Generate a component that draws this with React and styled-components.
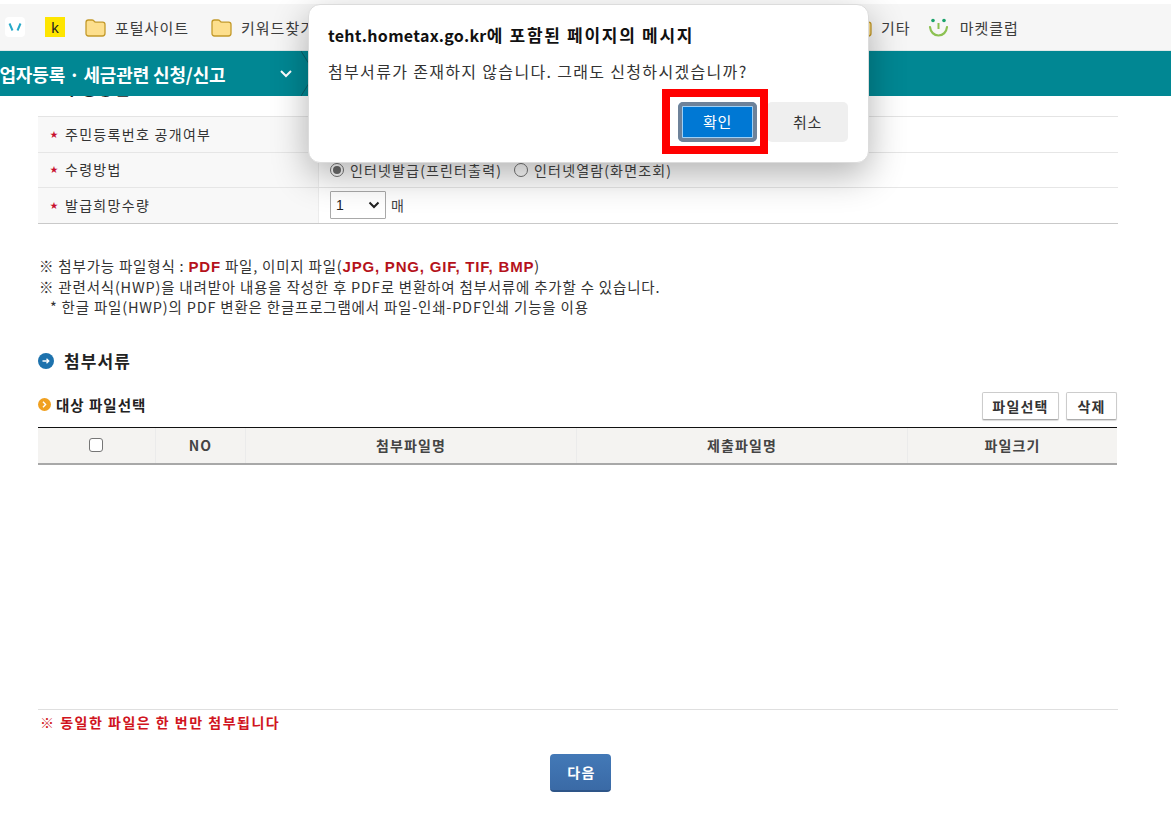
import React from "react";
import styled, { createGlobalStyle } from "styled-components";

const Global = createGlobalStyle`
  html, body { margin: 0; padding: 0; background: #fff; }
  body { width: 1171px; height: 816px; overflow: hidden; font-family: "Noto Sans CJK KR", "Noto Sans", sans-serif; color: #333; }
  * { box-sizing: border-box; }
`;
const Page = styled.div`position: relative; width: 1171px; height: 816px; overflow: hidden;`;
const Bookmarks = styled.div`
  height: 47px; margin-top: 4px; background: #f6f6f6; display: flex; align-items: center; padding-left: 5px;
  font-size: 15px; color: #3c3c3c; letter-spacing: 1px; position: relative; z-index: 2; border-bottom: 1px solid #dfe8e8;
`;
const Mark = styled.span`display: flex; align-items: center; gap: ${p => p.$gap || 9}px; margin-left: ${p => p.$ml || 0}px; white-space: nowrap;`;
const VTile = styled.span`width: 20px; height: 20px; border-radius: 4px; background: #fff; display: flex; align-items: center; justify-content: center;`;
const KTile = styled.span`width: 20px; height: 20px; background: #fee500; margin-left: 20px; display: flex; align-items: center; justify-content: center; font: 15px "Liberation Sans", sans-serif; color: #222; letter-spacing: 0;`;
const TealBar = styled.div`
  height: 45px; background: #018793; display: flex; align-items: center; position: relative; z-index: 2; overflow: hidden;
  color: #fff; font-weight: 700; font-size: 18px; letter-spacing: -0.15px; white-space: nowrap;
`;
const TealTitle = styled.span`margin-left: -17px;`;
const Chevron = styled.svg`margin-left: 54px;`;
const Divider = styled.svg`margin-left: 8px; flex: none;`;
const Main = styled.main`padding: 0 53px 0 38px; margin-top: -24px; position: relative; z-index: 1;`;
const SectionHead = styled.h2`
  margin: 0; display: flex; align-items: center; gap: 10px; height: 30px; padding-left: 0;
  font-size: 17px; font-weight: 700; color: #222; letter-spacing: 1.1px;
`;
const FormTable = styled.div`margin-top: 14px; border-top: 1px solid #e4e4e4; border-bottom: 1px solid #c9c9c9;`;
const FormRow = styled.div`
  display: grid; grid-template-columns: 281px 1fr; height: ${p => p.$h}px;
  & + & { border-top: 1px solid #e6e6e6; }
`;
const Label = styled.div`
  background: #f8f8f8; border-right: 1px solid #ececec; display: flex; align-items: center; padding: 0 0 2px 12px; gap: 9px;
  font-size: 14px; color: #333; letter-spacing: 1.3px;
`;
const Star = styled.span`color: #c8102e; font-size: 8px; line-height: 1; letter-spacing: 0; width: 6px;`;
const Value = styled.div`display: flex; align-items: center; padding: 0 0 1px 11px; font-size: 14px; color: #444; letter-spacing: 1.15px; gap: 6px;`;
const Radio = styled.span`
  width: 14px; height: 14px; border-radius: 50%; border: 1px solid #767676; background: #fff; display: inline-flex;
  align-items: center; justify-content: center; flex: none;
  &::after { content: ""; width: 8px; height: 8px; border-radius: 50%; background: ${p => p.$on ? "#6d6d6d" : "transparent"}; }
`;
const RadioText = styled.span`margin-right: 6px;`;
const FakeSelect = styled.span`
  width: 56px; height: 28px; border: 1px solid #a9a9a9; border-radius: 1px; background: #fff; display: flex; align-items: center;
  justify-content: space-between; padding: 0 5px; font: 14px "Liberation Sans", sans-serif; color: #222; margin-right: -1px;
`;
const Notes = styled.div`margin-top: 32px; font-size: 14.5px; line-height: 20.5px; color: #333; letter-spacing: 0.8px;`;
const Note = styled.div`white-space: nowrap; padding-left: ${p => p.$indent ? 12 : 1}px;`;
const Red = styled.b`color: #b5121b; font: 700 15px "Liberation Sans", sans-serif; letter-spacing: 0.8px;`;
const AttachHead = styled(SectionHead)`margin-top: 28px;`;
const SubBar = styled.div`display: flex; align-items: center; justify-content: space-between; margin-top: 15px; height: 30px; padding-right: 1px;`;
const SubTitle = styled.div`display: flex; align-items: center; gap: 5px; padding-bottom: 3px; font-size: 14.5px; font-weight: 700; color: #222; letter-spacing: 1px;`;
const Tools = styled.div`display: flex; gap: 7px;`;
const ToolBtn = styled.button`
  height: 28px; width: ${p => p.$w}px; padding: 0; background: #fff; border: 1px solid #ccc; border-bottom-color: #aaa; border-radius: 2px;
  box-shadow: 0 1px 1px rgba(0,0,0,.15); font: 700 14px "Noto Sans CJK KR", sans-serif; color: #333; letter-spacing: 1.2px;
`;
const FileTable = styled.div`
  margin-top: 6px; width: 1079px; height: 38px; border-top: 1px solid #111; border-bottom: 2px solid #a8a8a8; background: #f4f3f1;
  display: grid; grid-template-columns: 117px 90px 331px 331px 210px;
`;
const Th = styled.div`
  display: flex; align-items: center; justify-content: center; padding-bottom: 1px; font-size: 14px; font-weight: 700; color: #444; letter-spacing: 1.1px;
  & + & { border-left: 1px solid #ebebeb; }
`;
const Check = styled.span`width: 14px; height: 14px; margin-right: 1px; border: 1px solid #767676; border-radius: 3px; background: #fff;`;
const Footer = styled.div`margin-top: 244px; border-top: 1px solid #dfdfdf; width: 1080px; padding: 2px 0 0 2px; height: 45px; font-size: 14px; font-weight: 700; color: #d01420; letter-spacing: 1.5px;`;
const NextRow = styled.div`display: flex; justify-content: center; width: 1085px;`;
const NextBtn = styled.button`
  width: 61px; height: 38px; border: 0; border-radius: 4px; background: linear-gradient(#4379b7, #3a6aa6); border-bottom: 2px solid #2e5588;
  color: #fff; font: 700 14px "Noto Sans CJK KR", sans-serif; letter-spacing: 1.4px; padding: 0 0 0 2px;
`;
const Dialog = styled.div`
  position: absolute; z-index: 5; left: 308px; top: 4px; width: 561px; height: 159px; background: #fff; border-radius: 12px;
  border: 1px solid #dcdcdc; box-shadow: 0 12px 36px rgba(0,0,0,.3); padding: 18px 19px 0;
`;
const DialogTitle = styled.div`font-size: 17px; line-height: 24px; font-weight: 700; color: #111; letter-spacing: 1.7px; white-space: nowrap;`;
const Host = styled.span`font-size: 16px; letter-spacing: 0.3px;`;
const DialogMsg = styled.div`margin-top: 13px; font-size: 16px; line-height: 22px; color: #333; letter-spacing: 1.33px; white-space: nowrap;`;
const DialogActions = styled.div`display: flex; justify-content: flex-end; gap: 10px; margin-top: 20px; padding-right: 1px;`;
const Primary = styled.button`
  width: 79px; height: 40px; padding: 0 0 2px; border-radius: 5px; border: 1px solid #9fd0f5; background: #0078d4; color: #fff;
  outline: 3px solid #6e8299; outline-offset: -3px; box-shadow: inset 0 0 0 3px #6e8299, inset 0 0 0 4px #9fd0f5;
  font: 15px "Noto Sans CJK KR", sans-serif; letter-spacing: 0.8px;
`;
const Secondary = styled.button`
  width: 81px; height: 40px; padding: 0 0 2px; border: 0; border-radius: 5px; background: #efefef; color: #333;
  font: 15px "Noto Sans CJK KR", sans-serif; letter-spacing: 0.8px;
`;
const Highlight = styled.div`position: absolute; z-index: 6; left: 662px; top: 89px; width: 106px; height: 65px; border: 8px solid #f00; pointer-events: none;`;

const Folder = () => (
  <svg width="21" height="19" viewBox="0 0 21 19">
    <path d="M1 4.5C1 2.8 2 2 3.4 2h3.8c1 0 1.6.5 2.1 1.4.3.6.7.8 1.4.8h6.9c1.6 0 2.4 1 2.4 2.4v8.6c0 1.6-1 2.8-2.6 2.8H3.4C2 18 1 17 1 15.4z" fill="#fddf8d" stroke="#c49a2a" strokeWidth="1.3" />
  </svg>
);
const BlueDot = () => (
  <svg width="16" height="16" viewBox="0 0 16 16">
    <circle cx="8" cy="8" r="8" fill="#1d72ad" />
    <path d="M4.5 8h6M8.500 5.800 10.800 8 8.500 10.200" stroke="#fff" strokeWidth="1.3" fill="none" />
  </svg>
);
const OrangeDot = () => (
  <svg width="13" height="13" viewBox="0 0 13 13">
    <circle cx="6.5" cy="6.5" r="6.5" fill="#f0a020" />
    <path d="M5 3.8 7.6 6.5 5 9.2" stroke="#fff" strokeWidth="1.4" fill="none" />
  </svg>
);
const rows = [
  { h: 35, label: "주민등록번호 공개여부" },
  { h: 35, label: "수령방법" },
  { h: 36, label: "발급희망수량" },
];

export default function App() {
  return (
    <Page>
      <Global />
      <Bookmarks>
        <VTile>
          <svg width="14" height="10" viewBox="0 0 14 10"><path d="M1.500 1.500 4.500 8.500M12.500 1.500 9.500 8.500" stroke="#27a9c9" strokeWidth="2" fill="none" /></svg>
        </VTile>
        <KTile>k</KTile>
        <Mark $ml={20}><Folder />포털사이트</Mark>
        <Mark $ml={22}><Folder />키워드찾기</Mark>
        <Mark $ml={536}><Folder />기타</Mark>
        <Mark $ml={17} $gap={11}>
          <svg width="21" height="21" viewBox="0 0 21 21">
            <circle cx="5" cy="3.5" r="1.8" fill="#1aa36b" /><circle cx="16" cy="3.5" r="1.8" fill="#1aa36b" />
            <path d="M10.500 6v6" stroke="#8cc152" strokeWidth="2" />
            <path d="M2 10c.5 5 4 8.500 8.500 8.500S18.500 15 19 10" stroke="#8cc152" strokeWidth="2.2" fill="none" strokeLinecap="round" />
          </svg>
          마켓클럽
        </Mark>
      </Bookmarks>
      <TealBar>
        <TealTitle>사업자등록 · 세금관련 신청/신고</TealTitle>
        <Chevron width="14" height="10" viewBox="0 0 14 10"><path d="M2 2l5 5 5-5" stroke="#fff" strokeWidth="2" fill="none" /></Chevron>
        <Divider width="20" height="45" viewBox="0 0 20 45"><path d="M0 0 14 22.500 0 45" stroke="#0b5f68" strokeWidth="1" fill="none" /></Divider>
      </TealBar>
      <Main>
        <SectionHead><BlueDot />수령방법</SectionHead>
        <FormTable>
          {rows.map((r, i) => (
            <FormRow key={r.label} $h={r.h}>
              <Label><Star>★</Star>{r.label}</Label>
              <Value>
                {i === 1 && (<><Radio $on /><RadioText>인터넷발급(프린터출력)</RadioText><Radio /><RadioText>인터넷열람(화면조회)</RadioText></>)}
                {i === 2 && (<><FakeSelect>1<svg width="12" height="8" viewBox="0 0 12 8"><path d="M1.500 1.500 6 6l4.500-4.500" stroke="#222" strokeWidth="2" fill="none" /></svg></FakeSelect>매</>)}
              </Value>
            </FormRow>
          ))}
        </FormTable>
        <Notes>
          <Note>※ 첨부가능 파일형식 : <Red>PDF</Red> 파일, 이미지 파일(<Red>JPG, PNG, GIF, TIF, BMP</Red>)</Note>
          <Note>※ 관련서식(HWP)을 내려받아 내용을 작성한 후 PDF로 변환하여 첨부서류에 추가할 수 있습니다.</Note>
          <Note $indent>* 한글 파일(HWP)의 PDF 변환은 한글프로그램에서 파일-인쇄-PDF인쇄 기능을 이용</Note>
        </Notes>
        <AttachHead><BlueDot />첨부서류</AttachHead>
        <SubBar>
          <SubTitle><OrangeDot />대상 파일선택</SubTitle>
          <Tools><ToolBtn $w={77}>파일선택</ToolBtn><ToolBtn $w={51}>삭제</ToolBtn></Tools>
        </SubBar>
        <FileTable>
          <Th><Check /></Th><Th>NO</Th><Th>첨부파일명</Th><Th>제출파일명</Th><Th>파일크기</Th>
        </FileTable>
        <Footer>※ 동일한 파일은 한 번만 첨부됩니다</Footer>
        <NextRow><NextBtn>다음</NextBtn></NextRow>
      </Main>
      <Dialog>
        <DialogTitle><Host>teht.hometax.go.kr</Host>에 포함된 페이지의 메시지</DialogTitle>
        <DialogMsg>첨부서류가 존재하지 않습니다. 그래도 신청하시겠습니까?</DialogMsg>
        <DialogActions><Primary>확인</Primary><Secondary>취소</Secondary></DialogActions>
      </Dialog>
      <Highlight />
    </Page>
  );
}
